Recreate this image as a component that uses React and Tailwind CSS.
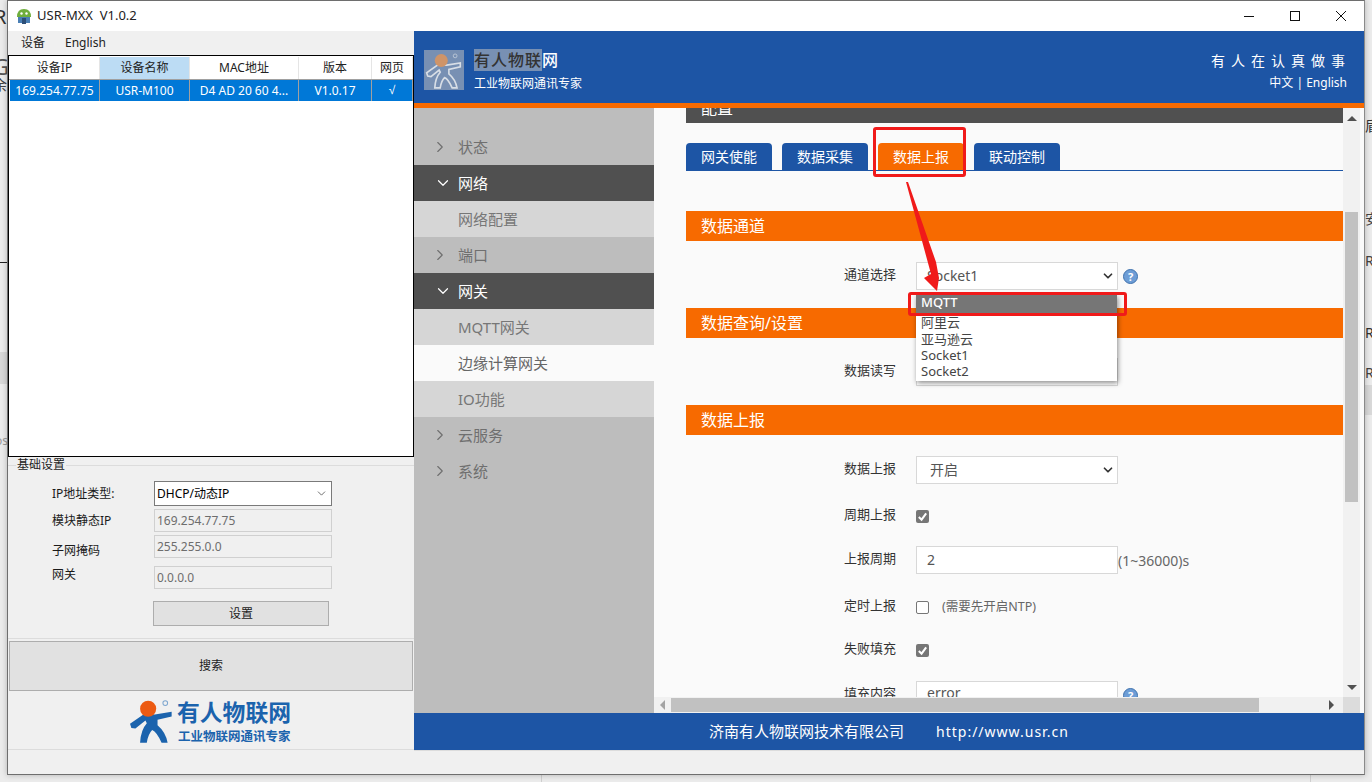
import { ChevronDown, ChevronRight } from 'lucide-react';

const FONT = "font-['Noto_Sans','Noto_Sans_CJK_SC',sans-serif]";

function Person({ size, fill, stroke, head, ring }) {
  return (
    <svg width={size} height={size} viewBox="20 20 140 140" className="shrink-0">
      <path
        d="M30 112 L26 100 L66 72 L100 72 L150 64 L150 78 L108 88 L108 104 Q132 124 138 156 L120 156 Q106 124 92 118 Q80 130 76 156 L56 156 Q58 118 76 98 L72 90 L42 114 Z"
        fill={fill}
        stroke={stroke}
        strokeWidth={stroke ? 6 : 0}
      />
      <circle cx="80" cy="55" r="24" fill={head} />
      <circle cx="131" cy="38" r="7" fill="none" stroke={ring} strokeWidth="3" />
    </svg>
  );
}

function Help() {
  return (
    <span className="w-[15px] h-[15px] rounded-full bg-[#6d9dd6] border border-[#3f72ae] text-white text-[11px] leading-[13px] font-bold text-center shrink-0">
      ?
    </span>
  );
}

function Checkbox({ checked }) {
  return checked ? (
    <span className="w-[13px] h-[13px] rounded-[2px] bg-[#767676] flex items-center justify-center">
      <svg width="11" height="11" viewBox="0 0 12 12">
        <path d="M2 6.5 L5 9.5 L10 2.5" fill="none" stroke="white" strokeWidth="2.2" />
      </svg>
    </span>
  ) : (
    <span className="w-[13px] h-[13px] rounded-[2px] border border-[#767676] bg-white" />
  );
}

function FormRow({ label, children }) {
  return (
    <div className="flex items-center h-[28px] shrink-0">
      <span className="w-[210px] text-right text-[13px] text-[#333] pb-[2px]">{label}</span>
      <div className="ml-[20px] flex items-center">{children}</div>
    </div>
  );
}

function SelectBox({ value, pad = 'pl-[13px]' }) {
  return (
    <div className={`w-[202px] h-[28px] bg-white border border-[#d8d8d8] flex items-center justify-between pr-[2px] text-[14px] text-[#555] ${pad}`}>
      <span className="pb-[1px]">{value}</span>
      <ChevronDown size={14} strokeWidth={3} className="text-[#333]" />
    </div>
  );
}

function Section({ title, className }) {
  return (
    <div className={`h-[30px] bg-[#f76a00] text-white text-[16px] leading-[30px] pl-[15px] shrink-0 ${className}`}>{title}</div>
  );
}

function Tab({ label, active }) {
  return (
    <div className={`w-[86px] h-[27px] rounded-t-[4px] text-white text-[14px] leading-[27px] text-center ${active ? 'bg-[#f76a00]' : 'bg-[#1d55a5]'}`}>
      {label}
    </div>
  );
}

function SideItem({ label, kind }) {
  if (kind === 'open') {
    return (
      <div className="h-[36px] bg-[#505050] text-white flex items-center text-[15px] pl-[20px]">
        <ChevronDown size={18} strokeWidth={1.6} className="mr-[6px]" />
        <span>{label}</span>
      </div>
    );
  }
  if (kind === 'closed') {
    return (
      <div className="h-[36px] text-[#6f6f6f] flex items-center text-[15px] pl-[17px]">
        <ChevronRight size={18} strokeWidth={1.5} className="mr-[9px]" />
        <span>{label}</span>
      </div>
    );
  }
  return (
    <div className={`h-[36px] flex items-center text-[15px] pl-[44px] ${kind === 'current' ? 'bg-[#fafafa] text-[#666]' : 'bg-[#d6d6d6] text-[#777]'}`}>
      {label}
    </div>
  );
}

function IpRow({ label, value, select, labelClass = '', className = '' }) {
  return (
    <div className={`flex items-center pl-[44px] ${className}`}>
      <span className={`w-[102px] text-[12px] text-[#1a1a1a] ${labelClass}`}>{label}</span>
      {select ? (
        <div className="w-[178px] h-[25px] bg-white border border-[#7a7a7a] flex items-center justify-between pl-[2px] pr-[3px] text-[12px] text-black">
          <span>{value}</span>
          <ChevronDown size={13} strokeWidth={1.4} className="text-[#444]" />
        </div>
      ) : (
        <div className="w-[178px] h-[23px] bg-[#f0f0f0] border border-[#d0d0d0] flex items-center pl-[2px] text-[12px] text-[#6d6d6d]">{value}</div>
      )}
    </div>
  );
}

const cols = ['w-[90px]', 'w-[90px]', 'w-[109px]', 'w-[73px]', 'w-[41px]'];
const heads = ['设备IP', '设备名称', 'MAC地址', '版本', '网页'];
const cells = ['169.254.77.75', 'USR-M100', 'D4 AD 20 60 4...', 'V1.0.17', '√'];

function LeftPanel() {
  return (
    <div className="w-[406px] flex flex-col shrink-0 bg-[#f0f0f0]">
      <div className="h-[24px] flex items-center gap-[20px] pl-[13px] text-[12px] text-[#222] shrink-0">
        <span>设备</span>
        <span>English</span>
      </div>

      <div className="h-[402px] bg-white border border-black shrink-0 pt-[1px]">
        <div className="flex h-[23px] pl-[1px] border-b border-[#a0a0a0]">
          {heads.map((h, i) => (
            <div key={h} className={`${cols[i]} text-[12px] leading-[22px] text-center text-[#222] border-r border-[#e5e5e5] ${i === 1 ? 'bg-[#bcdcf4]' : ''}`}>{h}</div>
          ))}
        </div>
        <div className="flex h-[21px] ml-[1px] w-[403px] bg-[#0078d7]">
          {cells.map((c, i) => (
            <div key={c} className={`${cols[i]} text-[12px] leading-[21px] text-center text-white border-r border-[#a0a0a0] whitespace-nowrap ${c === '√' ? "font-['Liberation_Sans']" : ''}`}>{c}</div>
          ))}
        </div>
      </div>

      <div className="relative mt-[8px] h-[174px] border-t border-b border-[#dcdcdc] shrink-0 pt-[15px]">
        <span className="absolute left-[8px] -top-[9px] bg-[#f0f0f0] px-[1px] text-[12px] leading-[16px] text-[#222]">基础设置</span>
        <IpRow label="IP地址类型:" value="DHCP/动态IP" select />
        <IpRow label="模块静态IP" value="169.254.77.75" className="mt-[3px]" />
        <IpRow label="子网掩码" value="255.255.0.0" className="mt-[3px]" labelClass="mt-[6px] -mb-[2px]" />
        <IpRow label="网关" value="0.0.0.0" className="mt-[8px]" labelClass="pb-[5px]" />
        <div className="ml-[145px] mt-[12px] w-[176px] h-[25px] bg-[#e1e1e1] border border-[#adadad] text-[12px] leading-[23px] text-center text-[#222]">设置</div>
      </div>

      <div className="mx-[1px] mt-[2px] h-[50px] bg-[#e1e1e1] border border-[#adadad] text-[12px] leading-[48px] text-center text-[#222] shrink-0">搜索</div>

      <div className="h-[59px] flex items-center pl-[120px] border-b border-[#dcdcdc] shrink-0">
        <Person size={47} fill="#1b63ad" head="#ec5a12" ring="#7da6cf" />
        <div className="ml-[2px] pt-[3px] text-[#1b63ad] font-bold">
          <div className="text-[22.8px] leading-[28px]">有人物联网</div>
          <div className="ml-[1px] mt-[3px] text-[12.5px] leading-[14px] whitespace-nowrap">工业物联网通讯专家</div>
        </div>
      </div>
    </div>
  );
}

function Overlay() {
  return (
    <>
      {/* dropdown list */}
      <div className="absolute left-[916px] top-[295px] w-[201px] h-[86px] bg-white shadow-[1px_2px_5px_rgba(0,0,0,0.45)] text-[13px] leading-[16px] text-[#444]">
        <div className="h-[18px] bg-[#767676] text-white pl-[5px] leading-[15px] font-medium">MQTT</div>
        <div className="pl-[5px] pt-[1px] h-[17px] overflow-hidden">阿里云</div>
        <div className="pl-[5px] pt-[1px] h-[17px]">亚马逊云</div>
        <div className="pl-[5px] h-[16px]">Socket1</div>
        <div className="pl-[5px] h-[16px]">Socket2</div>
      </div>
      {/* red annotations */}
      <div className="absolute left-[873px] top-[127px] w-[93px] h-[50px] border-[3px] border-[#f01a1a] rounded-[3px]" />
      <div className="absolute left-[908px] top-[292px] w-[219px] h-[24px] border-[3px] border-[#f01a1a] rounded-[3px]" />
      <svg className="absolute left-0 top-0" width="1372" height="782">
        <polygon points="906,182 908,182 936,262 939,278 937,291 924,278 931,274" fill="#f01a1a" />
      </svg>
    </>
  );
}

export default function App() {
  return (
    <div className={`relative w-[1372px] h-[782px] overflow-hidden bg-[#ececec] ${FONT}`}>
      {/* desktop windows peeking out behind */}
      <div className="absolute left-0 top-[262px] w-[8px] h-px bg-[#222]" />
      <div className="absolute -left-[6px] top-[2px] text-[20px] text-[#333]">R</div>
      <div className="absolute -left-[7px] top-[50px] text-[22px] text-[#555]">G</div>
      <div className="absolute -left-[7px] top-[74px] text-[14px] text-[#444]">余</div>
      <div className="absolute -left-[5px] top-[432px] text-[12px] text-[#999]">os</div>
      <div className="absolute left-0 top-[352px] w-[8px] h-[32px] bg-[#d8d8d8]" />
      <div className="absolute left-[1365px] top-[115px] text-[14px] text-[#333]">盾</div>
      <div className="absolute left-[1365px] top-[208px] text-[14px] text-[#444]">安</div>
      <div className="absolute left-[1365px] top-[250px] text-[14px] text-[#444]">R-</div>
      <div className="absolute left-[1365px] top-[322px] text-[14px] text-[#333]">R-</div>
      <div className="absolute left-[1365px] top-[362px] text-[14px] text-[#444]">R-</div>
      <div className="absolute left-[1364px] top-[385px] w-[8px] h-[30px] bg-[#d9d9d9]" />
      <div className="absolute left-[541px] top-[775px] w-px h-[7px] bg-[#d0d0d0]" />
      <div className="absolute left-[1310px] top-[775px] w-px h-[7px] bg-[#d0d0d0]" />

      <div className="relative ml-[7px] w-[1358px] h-[775px] bg-[#f0f0f0] border border-[#6e6e6e] border-r-[#8a8a8a] flex flex-col shadow-[0_0_6px_rgba(0,0,0,0.25)]">
        {/* title bar */}
        <div className="h-[30px] bg-white flex items-center shrink-0 text-[13px] text-[#222]">
          <svg width="16" height="16" viewBox="0 0 16 16" className="ml-[8px]">
            <path d="M1 9 Q1 1 8 1 Q15 1 15 9 Z" fill="#6fae3c" />
            <rect x="2" y="9" width="12" height="6" fill="#4a7fb5" />
            <rect x="6" y="10" width="4" height="6" fill="#2d4f78" />
            <circle cx="5.5" cy="5.5" r="1.2" fill="white" />
            <circle cx="10.5" cy="5.5" r="1.2" fill="white" />
          </svg>
          <span className="ml-[5px] whitespace-pre">USR-MXX  V1.0.2</span>
          <div className="ml-auto flex items-center">
            <svg width="12" height="12" viewBox="0 0 12 12" className="mr-[34px]"><path d="M1 6.5 H11" stroke="#111" /></svg>
            <svg width="12" height="12" viewBox="0 0 12 12" className="mr-[34px]"><rect x="1.5" y="1.5" width="9" height="9" fill="none" stroke="#111" /></svg>
            <svg width="12" height="12" viewBox="0 0 12 12" className="mr-[17px]"><path d="M1 1 L11 11 M11 1 L1 11" stroke="#111" /></svg>
          </div>
        </div>

        <div className="flex flex-1 min-h-0">
          <LeftPanel />

          <div className="w-[950px] flex flex-col">
            {/* header */}
            <div className="h-[72px] bg-[#1d55a5] flex items-center shrink-0 pl-[10px] pr-[17px] text-white">
              <div className="w-[40px] h-[40px] bg-[#7890b3] flex items-center justify-center mt-[6px]">
                <Person size={38} fill="#7890b3" stroke="#d8dee6" head="#cf9468" ring="#c4cedb" />
              </div>
              <div className="ml-[10px] mt-[8px]">
                <div className="text-[16px] leading-[20px] tracking-[1px] font-medium">
                  <span className="bg-[#7890b3] text-[#333]">有人物联</span>网
                </div>
                <div className="text-[12px] leading-[17px] mt-[5px]">工业物联网通讯专家</div>
              </div>
              <div className="ml-auto text-right mt-[9px]">
                <div className="text-[14px] leading-[20px] tracking-[6px] mr-[-4px]">有人在认真做事</div>
                <div className="text-[12px] leading-[18px] mt-[3px]">中文 | English</div>
              </div>
            </div>
            <div className="h-[5px] bg-[#f76a00] shrink-0" />

            {/* middle */}
            <div className="h-[605px] flex shrink-0">
              <div className="w-[240px] bg-[#bdbdbd] pt-[21px] shrink-0 overflow-hidden">
                <SideItem label="状态" kind="closed" />
                <SideItem label="网络" kind="open" />
                <SideItem label="网络配置" />
                <SideItem label="端口" kind="closed" />
                <SideItem label="网关" kind="open" />
                <SideItem label="MQTT网关" />
                <SideItem label="边缘计算网关" kind="current" />
                <SideItem label="IO功能" />
                <SideItem label="云服务" kind="closed" />
                <SideItem label="系统" kind="closed" />
              </div>

              <div className="flex-1 min-w-0 flex flex-col bg-[#fafafa]">
                <div className="flex h-[589px] shrink-0">
                  <div className="w-[689px] pl-[32px] flex flex-col overflow-hidden shrink-0">
                    <div className="h-[15px] bg-[#505050] text-white text-[16px] pl-[15px] flex items-end overflow-hidden shrink-0">
                      <span className="h-[30px] leading-[30px]">配置</span>
                    </div>
                    <div className="mt-[20px] h-[28px] flex gap-[10px] border-b border-[#1d55a5] shrink-0">
                      <Tab label="网关使能" />
                      <Tab label="数据采集" />
                      <Tab label="数据上报" active />
                      <Tab label="联动控制" />
                    </div>
                    <Section title="数据通道" className="mt-[40px]" />
                    <div className="mt-[21px]">
                      <FormRow label="通道选择">
                        <SelectBox value="Socket1" pad="pl-[10px]" />
                        <span className="ml-[5px] flex"><Help /></span>
                      </FormRow>
                    </div>
                    <Section title="数据查询/设置" className="mt-[18px]" />
                    <div className="mt-[20px]">
                      <FormRow label="数据读写"><SelectBox value="开启" /></FormRow>
                    </div>
                    <Section title="数据上报" className="mt-[19px]" />
                    <div className="mt-[21px]">
                      <FormRow label="数据上报"><SelectBox value="开启" /></FormRow>
                    </div>
                    <div className="mt-[18px]">
                      <FormRow label="周期上报"><Checkbox checked /></FormRow>
                    </div>
                    <div className="mt-[16px]">
                      <FormRow label="上报周期">
                        <div className="w-[202px] h-[28px] bg-white border border-[#d8d8d8] pl-[10px] text-[14px] leading-[26px] text-[#555]">2</div>
                        <span className="text-[14px] text-[#666] whitespace-nowrap">(1~36000)s</span>
                      </FormRow>
                    </div>
                    <div className="mt-[19px]">
                      <FormRow label="定时上报">
                        <Checkbox />
                        <span className="ml-[13px] text-[12.5px] text-[#666]">(需要先开启NTP)</span>
                      </FormRow>
                    </div>
                    <div className="mt-[15px]">
                      <FormRow label="失败填充"><Checkbox checked /></FormRow>
                    </div>
                    <div className="mt-[17px]">
                      <FormRow label="填充内容">
                        <div className="w-[202px] h-[28px] bg-white border border-[#d8d8d8] pl-[10px] text-[14px] leading-[22px] text-[#555]">error</div>
                        <span className="ml-[5px] flex"><Help /></span>
                      </FormRow>
                    </div>
                  </div>
                  {/* vertical scrollbar */}
                  <div className="w-[17px] bg-[#f1f1f1] shrink-0 flex flex-col items-center">
                    <div className="mt-[8px] w-0 h-0 border-x-[5px] border-x-transparent border-b-[5px] border-b-[#505050]" />
                    <div className="mt-[91px] w-[13px] h-[290px] bg-[#c1c1c1]" />
                    <div className="mt-[183px] w-0 h-0 border-x-[5px] border-x-transparent border-t-[5px] border-t-[#505050]" />
                  </div>
                </div>
                {/* horizontal scrollbar */}
                <div className="h-[16px] flex shrink-0">
                  <div className="w-[689px] bg-[#f1f1f1] flex items-center shrink-0 pl-[6px]">
                    <div className="w-0 h-0 border-y-[5px] border-y-transparent border-r-[5px] border-r-[#a3a3a3]" />
                    <div className="ml-[6px] w-[588px] h-[14px] bg-[#c1c1c1]" />
                    <div className="ml-[70px] w-0 h-0 border-y-[5px] border-y-transparent border-l-[5px] border-l-[#505050]" />
                  </div>
                  <div className="w-[17px] bg-[#dcdcdc]" />
                </div>
              </div>
            </div>

            {/* footer */}
            <div className="h-[37px] bg-[#1d55a5] text-white flex items-center shrink-0 pl-[295px]">
              <span className="text-[15px]">济南有人物联网技术有限公司</span>
              <span className="ml-[32px] text-[14px] tracking-[1px]">http://www.usr.cn</span>
            </div>
            <div className="h-[24px] bg-[#f0f0f0] border-t border-[#dcdcdc] shrink-0" />
          </div>
        </div>
      </div>

      <Overlay />
    </div>
  );
}
